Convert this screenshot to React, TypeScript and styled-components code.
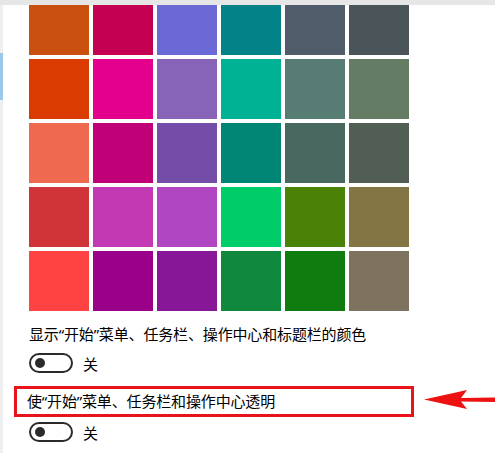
import styled, { createGlobalStyle } from 'styled-components';

const GlobalStyle = createGlobalStyle`
  html, body {
    margin: 0;
    padding: 0;
    background: #ffffff;
  }
  body {
    font-family: "Noto Sans", "Noto Sans CJK SC", sans-serif;
    color: #000;
  }
`;

const swatches = [
  ['#ca5010', '#c30052', '#6b69d6', '#038387', '#515c6b', '#4a5459'],
  ['#da3b01', '#e3008c', '#8764b8', '#00b294', '#567c73', '#647c64'],
  ['#ef6950', '#bf0077', '#744da9', '#018574', '#486860', '#525e54'],
  ['#d13438', '#c239b3', '#b146c2', '#00cc6a', '#498205', '#847545'],
  ['#ff4343', '#9a0089', '#881798', '#10893e', '#107c10', '#7e735f'],
];

function Toggle() {
  return (
    <ToggleRow>
      <Switch>
        <Knob />
      </Switch>
      <ToggleLabel>关</ToggleLabel>
    </ToggleRow>
  );
}

export default function App() {
  return (
    <>
      <GlobalStyle />
      <Page>
        <TopStrip />
        <Body>
          <Rail>
            <RailIndicator />
          </Rail>
          <Content>
            <Swatches>
              {swatches.flat().map((c, i) => (
                <Swatch key={i} $color={c} />
              ))}
            </Swatches>
            <OptionTitle>显示“开始”菜单、任务栏、操作中心和标题栏的颜色</OptionTitle>
            <Toggle />
            <Highlighted>
              使“开始”菜单、任务栏和操作中心透明
              <Arrow width="72" height="20" viewBox="0 0 72 20" aria-hidden>
                <path d="M0 9.5 L43 0 L37 8 L72 7.5 L72 12 L37 11.5 L43 19 Z" fill="#ee1111" />
              </Arrow>
            </Highlighted>
            <Toggle />
          </Content>
        </Body>
      </Page>
    </>
  );
}

const Page = styled.div`
  display: flex;
  flex-direction: column;
  width: 495px;
  height: 453px;
  overflow: hidden;
`;

const TopStrip = styled.div`
  height: 5px;
  background: #e6e6e6;
  flex-shrink: 0;
`;

const Body = styled.div`
  display: flex;
  flex: 1;
`;

const Rail = styled.div`
  width: 3px;
  background: #efefef;
  display: flex;
  flex-direction: column;
`;

const RailIndicator = styled.div`
  margin-top: 48px;
  height: 47px;
  background: #9cc8ec;
`;

const Content = styled.div`
  flex: 1;
  padding-left: 26px;
  display: flex;
  flex-direction: column;
`;

const Swatches = styled.div`
  display: grid;
  grid-template-columns: repeat(6, 60px);
  grid-template-rows: 50px repeat(4, 60px);
  gap: 4px;
`;

const Swatch = styled.div<{ $color: string }>`
  background: ${({ $color }) => $color};
`;

const OptionTitle = styled.div`
  margin-top: 13px;
  font-size: 15px;
  line-height: 20px;
  letter-spacing: -0.15px;
`;

const ToggleRow = styled.div`
  display: flex;
  align-items: center;
  height: 20px;
  margin-top: 9px;
`;

const Switch = styled.div`
  box-sizing: border-box;
  width: 44px;
  height: 20px;
  border: 2px solid #2b2b2b;
  border-radius: 10px;
  display: flex;
  align-items: center;
  padding-left: 4px;
`;

const Knob = styled.div`
  width: 10px;
  height: 10px;
  border-radius: 50%;
  background: #2b2b2b;
`;

const ToggleLabel = styled.span`
  margin-left: 10px;
  font-size: 15px;
`;

const Highlighted = styled.div`
  position: relative;
  box-sizing: border-box;
  margin: 13px 0 0 -15px;
  width: 400px;
  height: 31px;
  border: 3px solid #e8141a;
  padding-left: 10px;
  font-size: 15px;
  line-height: 25px;
  letter-spacing: -0.15px;

  & + ${ToggleRow} {
    margin-top: 5px;
  }
`;

const Arrow = styled.svg`
  position: absolute;
  left: 407px;
  top: 1px;
`;
